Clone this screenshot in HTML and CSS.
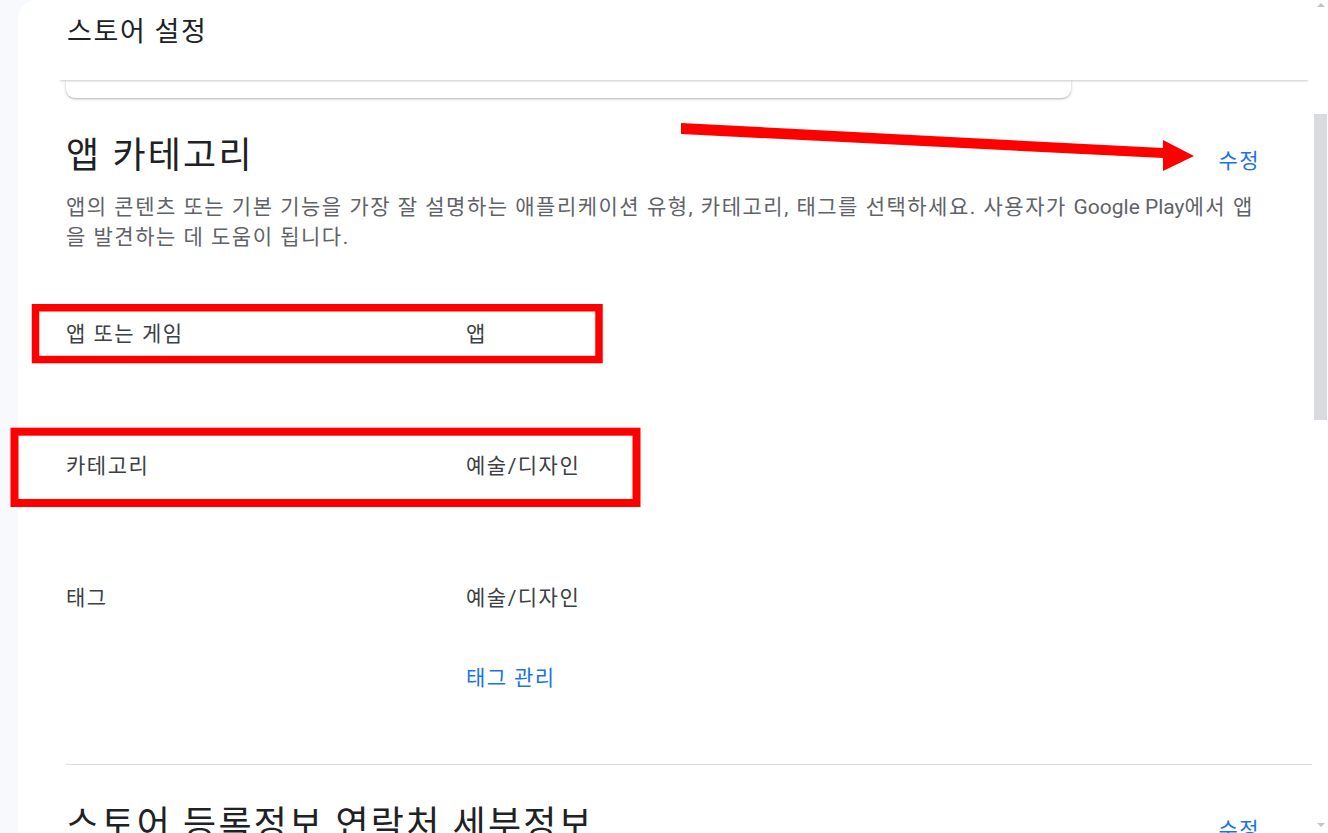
FILE: index.html
```html
<!DOCTYPE html>
<html lang="ko">
<head>
<meta charset="utf-8">
<title>스토어 설정</title>
<link rel="stylesheet" href="styles.css">
</head>
<body>
<div class="app">
  <div class="rail"></div>
  <main class="panel">
    <header class="topbar"><h1 class="title">스토어 설정</h1></header>
    <div class="card-tail"></div>
    <section class="section">
      <div class="section-head">
        <h2 class="section-title">앱 카테고리</h2>
        <a class="edit">수정</a>
      </div>
      <p class="desc">앱의 콘텐츠 또는 기본 기능을 가장 잘 설명하는 애플리케이션 유형, 카테고리, 태그를 선택하세요. 사용자가 <span class="latin">Google Play</span>에서 앱을 발견하는 데 도움이 됩니다.</p>
      <dl class="rows">
        <div class="row"><dt class="label">앱 또는 게임</dt><dd class="value">앱</dd></div>
        <div class="row"><dt class="label">카테고리</dt><dd class="value">예술/디자인</dd></div>
        <div class="row"><dt class="label">태그</dt><dd class="value"><div>예술/디자인</div><a class="link tag-link">태그 관리</a></dd></div>
      </dl>
    </section>
    <section class="section section-next">
      <div class="section-head">
        <h2 class="section-title">스토어 등록정보 연락처 세부정보</h2>
        <a class="edit">수정</a>
      </div>
    </section>
  </main>
  <div class="scrollbar">
    <div class="sb-btn sb-up"><span class="tri-up"></span></div>
    <div class="sb-thumb"></div>
    <div class="sb-btn sb-down"><span class="tri-down"></span></div>
  </div>
</div>
<svg class="annot" width="1328" height="833" viewBox="0 0 1328 833">
  <polygon points="681,123 1163,148 1163,140 1194,156 1163,171 1163,158 681,134" fill="#ff0000"/>
  <rect x="35.5" y="307.75" width="563.5" height="51.8" fill="none" stroke="#ff0000" stroke-width="7.5"/>
  <rect x="14.5" y="431.7" width="622" height="71.3" fill="none" stroke="#ff0000" stroke-width="8"/>
</svg>
</body>
</html>
```
FILE: styles.css
```css
html, body {
  margin: 0;
  padding: 0;
  height: 833px;
  overflow: hidden;
}
body {
  font-family: Roboto, "Noto Sans CJK KR", sans-serif;
  color: #3c4043;
  background: #f8f9fd;
  position: relative;
}
.app {
  display: flex;
  height: 833px;
}
.rail {
  width: 18px;
  flex: none;
  background: #f8f9fd;
}
.panel {
  flex: 1;
  background: #fff;
  border-top-left-radius: 18px;
  overflow: hidden;
  min-width: 0;
}
.topbar {
  position: relative;
  z-index: 2;
  height: 80px;
  box-sizing: border-box;
  margin: 0 3px 0 40px;
  padding: 16px 0 0 9px;
  background: #fff;
  box-shadow: 0 3px 2px -2px rgba(60, 64, 67, 0.28);
}
.title {
  margin: 0;
  font-size: 27px;
  line-height: 32px;
  font-weight: 400;
  letter-spacing: 1.6px;
  color: #202124;
}
.card-tail {
  position: relative;
  z-index: 1;
  margin-left: 48px;
  width: 1005px;
  height: 18px;
  background: #fff;
  border-radius: 0 0 9px 9px;
  box-shadow: 0 1px 3px rgba(60, 64, 67, 0.32), 0 1px 1px rgba(60, 64, 67, 0.12);
}
.section {
  margin: 0 1px 0 48px;
  padding-bottom: 22px;
  border-bottom: 1px solid #dadce0;
}
.section-head {
  display: flex;
  justify-content: space-between;
  align-items: baseline;
  margin-top: 36px;
  padding-right: 52px;
}
.section-title {
  margin: 0;
  font-size: 36px;
  line-height: 44px;
  font-weight: 400;
  letter-spacing: 2.2px;
  color: #202124;
}
.edit, .link {
  color: #1a73e8;
  font-size: 21px;
  line-height: 30px;
  letter-spacing: 1.4px;
  text-decoration: none;
}
.desc {
  margin: 14px 0 0;
  padding-right: 50px;
  font-size: 21px;
  line-height: 30px;
  letter-spacing: 1.5px;
  color: #5f6368;
}
.latin {
  letter-spacing: 0;
  font-size: 21px;
}
.rows {
  margin: 16px 0 0;
}
.row {
  display: grid;
  grid-template-columns: 400px 1fr;
  padding: 51px 0;
  font-size: 21px;
  line-height: 30px;
  letter-spacing: 1.5px;
  color: #3c4043;
}
.label, .value {
  margin: 0;
}
.tag-link {
  display: block;
  margin-top: 48px;
  transform: translateY(2px);
}
.section-next {
  border-bottom: none;
}
.section-next .section-head {
  margin-top: 38px;
}
.scrollbar {
  width: 15px;
  flex: none;
  background: #fff;
  display: flex;
  flex-direction: column;
}
.sb-btn {
  display: flex;
  align-items: center;
  justify-content: center;
}
.sb-up {
  height: 10px;
}
.sb-down {
  height: 16px;
  margin-top: auto;
}
.tri-up {
  width: 0;
  height: 0;
  border-left: 4px solid transparent;
  border-right: 4px solid transparent;
  border-bottom: 4px solid #c4c4c4;
}
.tri-down {
  width: 0;
  height: 0;
  border-left: 4px solid transparent;
  border-right: 4px solid transparent;
  border-top: 4px solid #c4c4c4;
}
.sb-thumb {
  margin: 104px 1px 0;
  height: 306px;
  background: #dadbdf;
}
.annot {
  position: absolute;
  left: 0;
  top: 0;
  pointer-events: none;
}
```
